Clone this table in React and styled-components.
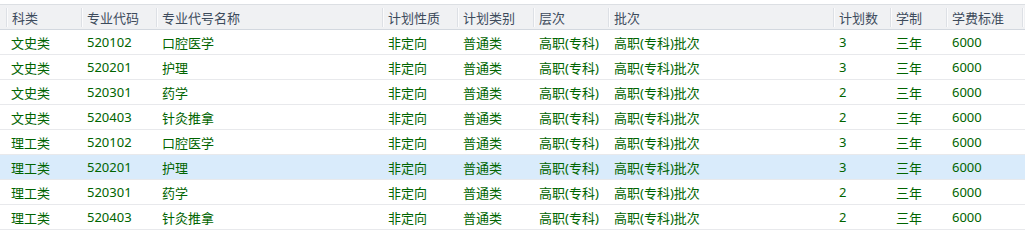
import styled, { createGlobalStyle } from "styled-components";

const GlobalStyle = createGlobalStyle`
  body {
    margin: 0;
    background: #fff;
    font-family: "Noto Sans", "Noto Sans CJK SC", sans-serif;
  }
`;

const Wrapper = styled.div`
  padding-top: 4px;
`;

const Table = styled.table`
  width: 1025px;
  border-collapse: collapse;
  table-layout: fixed;
  font-size: 13px;
  border-top: 1px solid #dcdfe3;
`;

const HeadCell = styled.th`
  height: 24px;
  padding: 0 0 0 ${(p) => (p.$lead ? "6px" : "0")};
  background: #f0f1f3;
  border-bottom: 1px solid #d3d8df;
  font-weight: normal;
  text-align: left;
  color: #3d4b5c;
  white-space: nowrap;
  overflow: hidden;
`;

const HeadLabel = styled.div`
  display: flex;
  align-items: center;
  height: 19px;
  padding-left: 5px;
  border-left: 1px solid #dde0e5;
  box-shadow: inset 1px 0 0 #fbfbfc;
`;

const Row = styled.tr`
  background: ${(p) => (p.$selected ? "#d9ebfb" : "#fff")};
`;

const Cell = styled.td`
  height: 24px;
  padding: 0 0 0 ${(p) => (p.$lead ? "11px" : "6px")};
  border-bottom: 1px solid #e8e9ec;
  color: #006400;
  white-space: nowrap;
  overflow: hidden;
`;

const columns = [
  { key: "kl", title: "科类", width: 81 },
  { key: "code", title: "专业代码", width: 75 },
  { key: "name", title: "专业代号名称", width: 226 },
  { key: "xz", title: "计划性质", width: 75 },
  { key: "lb", title: "计划类别", width: 76 },
  { key: "cc", title: "层次", width: 75 },
  { key: "pc", title: "批次", width: 225 },
  { key: "num", title: "计划数", width: 57 },
  { key: "xzh", title: "学制", width: 56 },
  { key: "fee", title: "学费标准", width: 76 },
];

const majors = [
  ["520102", "口腔医学", 3],
  ["520201", "护理", 3],
  ["520301", "药学", 2],
  ["520403", "针灸推拿", 2],
];

const rows = ["文史类", "理工类"].flatMap((kl) =>
  majors.map(([code, name, num]) => ({
    kl,
    code,
    name,
    xz: "非定向",
    lb: "普通类",
    cc: "高职(专科)",
    pc: "高职(专科)批次",
    num,
    xzh: "三年",
    fee: "6000",
  }))
);

function App() {
  return (
    <Wrapper>
      <GlobalStyle />
      <Table>
        <colgroup>
          {columns.map((c) => (
            <col key={c.key} style={{ width: c.width }} />
          ))}
          <col style={{ width: 3 }} />
        </colgroup>
        <thead>
          <tr>
            {columns.map((c, i) => (
              <HeadCell key={c.key} $lead={i === 0}>
                <HeadLabel>{c.title}</HeadLabel>
              </HeadCell>
            ))}
            <HeadCell>
              <HeadLabel />
            </HeadCell>
          </tr>
        </thead>
        <tbody>
          {rows.map((r, i) => (
            <Row key={i} $selected={i === 5}>
              {columns.map((c, j) => (
                <Cell key={c.key} $lead={j === 0}>
                  {r[c.key]}
                </Cell>
              ))}
              <Cell />
            </Row>
          ))}
        </tbody>
      </Table>
    </Wrapper>
  );
}

export default App;
